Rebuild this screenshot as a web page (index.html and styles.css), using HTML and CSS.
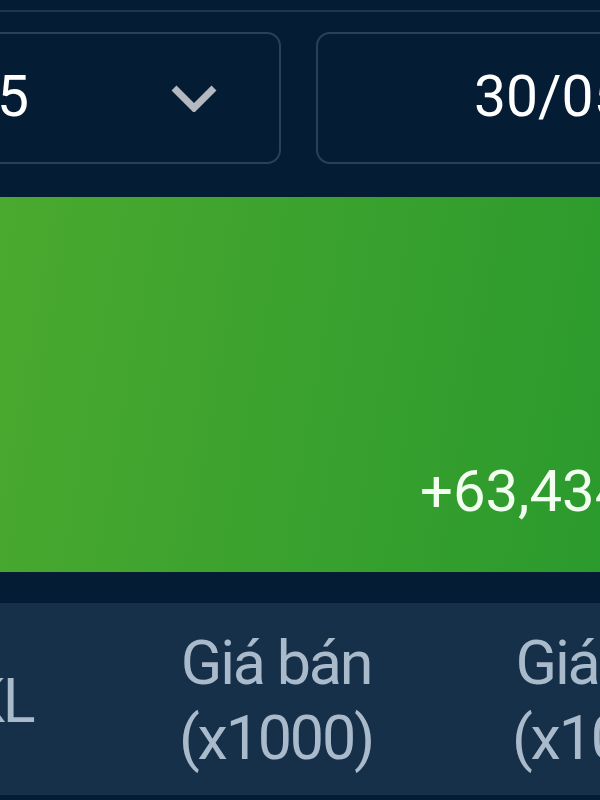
FILE: index.html
```html
<html>
	<head>
		<title>Bảng giá</title>
		<meta charset="utf-8">
		<link rel="stylesheet" href="styles.css">
	</head>
	<body>
		<div class="top-rule"></div>
		<div class="filters">
			<div class="select">
				<span class="field-text">5</span>
				<svg class="chevron" width="48" height="28" viewBox="0 0 48 28">
					<polyline points="4,4 24,24 44,4" fill="none" stroke="#b3b9bf" stroke-width="7"/>
				</svg>
			</div>
			<div class="date-field">
				<span class="field-text">30/05/2025</span>
			</div>
		</div>
		<div class="summary">
			<span class="summary-value">+63,434</span>
		</div>
		<div class="table-head">
			<div class="th th-qty">KL</div>
			<div class="th th-sell">Giá bán<br>(x1000)</div>
			<div class="th th-cost">Giá vốn<br>(x1000)</div>
		</div>
	</body>
</html>
```

FILE: styles.css
```css
body {
	margin: 0;
	width: 600px;
	height: 800px;
	overflow: hidden;
	background-color: #041c34;
	font-family: Roboto, "Liberation Sans", sans-serif;
}
.top-rule {
	height: 10px;
	border-bottom: 2px solid #1e3650;
}
.filters {
	display: flex;
	gap: 35px;
	margin-top: 20px;
	margin-left: -20px;
}
.select, .date-field {
	box-sizing: border-box;
	height: 132px;
	flex-shrink: 0;
	display: flex;
	align-items: center;
	border: 2px solid #2a4159;
	border-radius: 14px;
}
.select {
	width: 301px;
	padding-left: 15px;
	padding-right: 61px;
}
.chevron {
	margin-left: auto;
}
.date-field {
	width: 400px;
	padding-left: 156px;
}
.field-text {
	font-size: 57px;
	line-height: 1;
	color: #fff;
	white-space: nowrap;
	padding-bottom: 4px;
}
.summary {
	box-sizing: border-box;
	height: 375px;
	margin-top: 33px;
	display: flex;
	align-items: flex-end;
	padding: 0 0 46px 420px;
	background: linear-gradient(100deg, #4aa92f, #2b9a2d);
}
.summary-value {
	font-size: 58px;
	line-height: 70px;
	color: #f2fff0;
	white-space: nowrap;
}
.table-head {
	box-sizing: border-box;
	height: 192px;
	margin-top: 31px;
	margin-left: -100px;
	padding-top: 4px;
	display: flex;
	align-items: center;
	background-color: #17304a;
}
.th {
	flex-shrink: 0;
	font-size: 61px;
	line-height: 75px;
	letter-spacing: -2.2px;
	color: #a9bacb;
	text-align: center;
	white-space: nowrap;
}
.th-qty {
	width: 200px;
}
.th-sell {
	width: 352px;
}
.th-cost {
	width: 314px;
}
```
